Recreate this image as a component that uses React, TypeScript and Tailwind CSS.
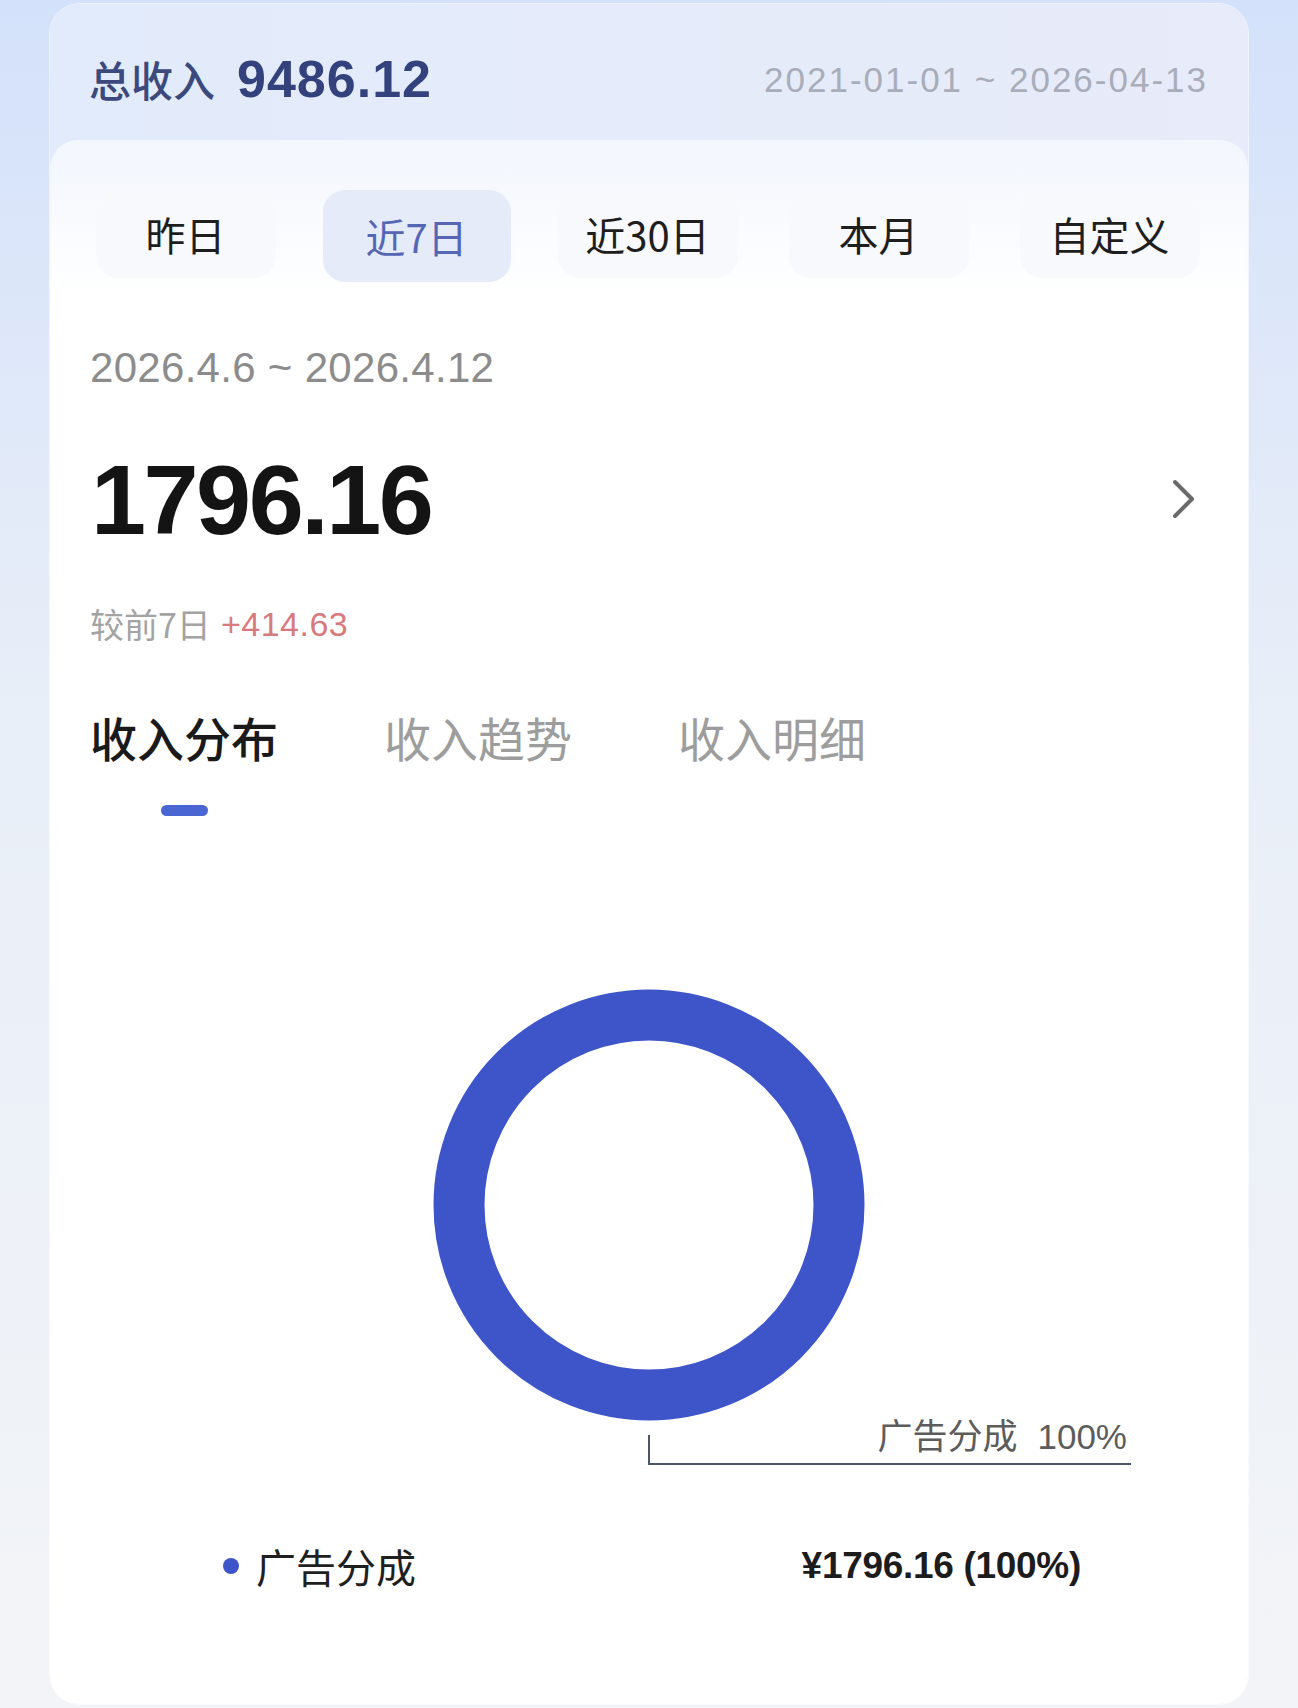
import React from "react";

const cjk = '"Noto Sans CJK SC", "Noto Sans", sans-serif';
const num = '"Liberation Sans", "Noto Sans CJK SC", sans-serif';

export default function App() {
  const ranges = ["昨日", "近7日", "近30日", "本月", "自定义"];
  const subTabs = ["收入分布", "收入趋势", "收入明细"];
  return (
    <div
      className="w-[1298px] h-[1708px] bg-gradient-to-b from-[#d3e1fa] via-[#e8eef8] via-40% to-[#f2f4f7] pt-[4px] px-[50px] overflow-hidden"
      style={{ fontFamily: cjk }}
    >
      <div className="w-[1198px] h-[1700px] rounded-[30px] bg-gradient-to-r from-[#e2ebfb] to-[#e8ebf9] flex flex-col shadow-[0_0_0_1px_rgba(255,255,255,0.6)]">
        {/* header */}
        <div className="h-[136px] flex items-center justify-between pl-[39px] pr-[40px] pt-[14px]">
          <div className="flex items-center">
            <span className="text-[42px] font-medium text-[#3b497c] leading-none">总收入</span>
            <span
              className="ml-[22px] text-[52px] font-bold text-[#33427c] leading-none tracking-[1px]"
              style={{ fontFamily: num }}
            >
              9486.12
            </span>
          </div>
          <span
            className="text-[35px] text-[#a9adba] tracking-[2px] leading-none"
            style={{ fontFamily: num }}
          >
            2021-01-01 ~ 2026-04-13
          </span>
        </div>

        {/* white panel */}
        <div className="flex-1 rounded-[28px] bg-gradient-to-b from-[#f2f6fd] via-white via-[160px] to-white flex flex-col">
          {/* range tabs */}
          <div className="mt-[50px] ml-[20px] w-[1155px] grid grid-cols-5">
            {ranges.map((r, i) => (
              <div key={r} className="flex justify-center">
                <div
                  className={
                    i === 1
                      ? "w-[188px] h-[92px] rounded-[22px] bg-[#e5ebf9] flex items-center justify-center text-[40px] text-[#5466b4]"
                      : "w-[180px] h-[88px] rounded-[22px] bg-[#f8f9fc] flex items-center justify-center text-[40px] text-[#1e1e1e]"
                  }
                >
                  {r}
                </div>
              </div>
            ))}
          </div>

          {/* date range */}
          <div
            className="mt-[62px] pl-[40px] text-[42px] leading-[48px] text-[#8c8c8c] tracking-[0.3px]"
            style={{ fontFamily: num }}
          >
            2026.4.6 ~ 2026.4.12
          </div>

          {/* big number */}
          <div className="mt-[57px] pl-[41px] pr-[50px] flex items-center justify-between h-[100px]">
            <span
              className="text-[99px] font-bold leading-none text-[#141414] tracking-[-2.5px]"
              style={{ fontFamily: num }}
            >
              1796.16
            </span>
            <svg width="28" height="42" viewBox="0 0 28 42" className="mr-[0px]">
              <polyline
                points="5,4 22,21 5,38"
                fill="none"
                stroke="#6a6a6a"
                strokeWidth="4"
                strokeLinecap="round"
                strokeLinejoin="round"
              />
            </svg>
          </div>

          {/* compare */}
          <div className="mt-[55px] pl-[40px] h-[40px] flex items-center text-[34px] leading-none">
            <span className="text-[#a3a3a3]">较前7日</span>
            <span className="ml-[10px] text-[#d77a7e] tracking-[0.5px]" style={{ fontFamily: num }}>
              +414.63
            </span>
          </div>

          {/* sub tabs */}
          <div className="mt-[67px] pl-[40px] flex gap-[106px]">
            {subTabs.map((t, i) => (
              <div key={t} className="flex flex-col items-center">
                <span
                  className={
                    i === 0
                      ? "text-[47px] leading-[52px] font-medium text-[#1a1a1a]"
                      : "text-[47px] leading-[52px] text-[#9d9d9d]"
                  }
                >
                  {t}
                </span>
                <div
                  className={
                    i === 0
                      ? "mt-[42px] w-[47px] h-[11px] rounded-full bg-[#4a66d2]"
                      : "mt-[42px] w-[47px] h-[11px]"
                  }
                />
              </div>
            ))}
          </div>

          {/* donut chart */}
          <svg width="1198" height="690" viewBox="0 0 1198 690" className="block">
            <circle cx="599" cy="389" r="190" fill="none" stroke="#3d55c9" strokeWidth="51" />
            <polyline
              points="599,619 599,648 1081,648"
              fill="none"
              stroke="#4b5568"
              strokeWidth="2"
            />
            <text
              x="1077"
              y="633"
              textAnchor="end"
              fontSize="35"
              fill="#5c5c5c"
              style={{ fontFamily: cjk }}
            >
              广告分成
              <tspan dx="20" style={{ fontFamily: num }}>100%</tspan>
            </text>
          </svg>

          {/* legend */}
          <div className="mt-[30px] h-[60px] pl-[173px] pr-[167px] flex items-center justify-between">
            <div className="flex items-center">
              <span className="w-[16px] h-[16px] rounded-full bg-[#3d55c9]" />
              <span className="ml-[17px] text-[40px] text-[#1f1f1f]">广告分成</span>
            </div>
            <span
              className="text-[37px] font-bold text-[#1c1c1c] tracking-[-0.3px]"
              style={{ fontFamily: num }}
            >
              ¥1796.16 (100%)
            </span>
          </div>
        </div>
      </div>
    </div>
  );
}
